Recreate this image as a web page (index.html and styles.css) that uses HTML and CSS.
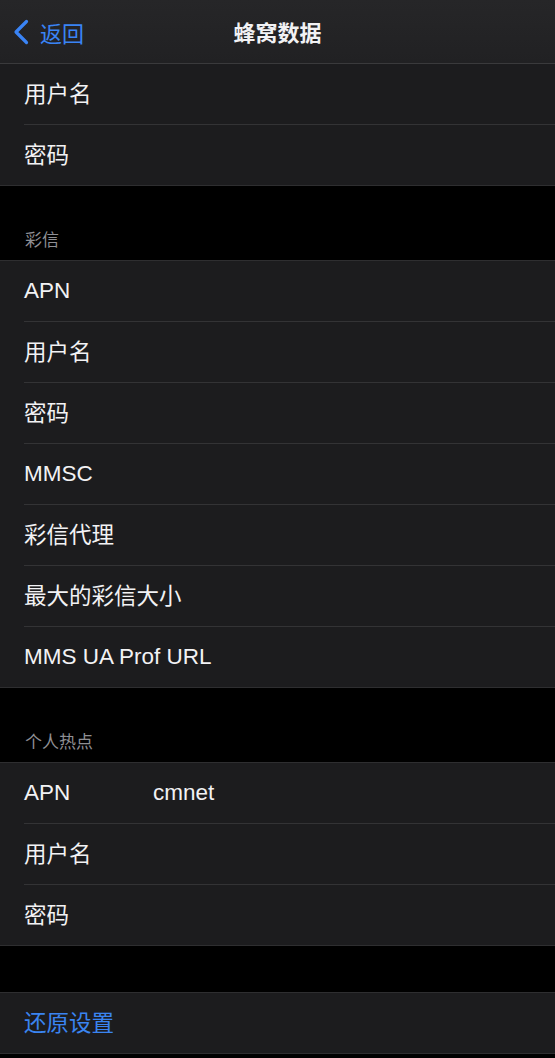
FILE: index.html
```html
<!DOCTYPE html>
<html lang="zh-CN">
<head>
    <meta charset="UTF-8">
    <meta name="viewport" content="width=device-width, initial-scale=1.0">
    <title>蜂窝数据</title>
    <link rel="stylesheet" href="styles.css">
</head>
<body>
    <div class="nav">
        <div class="nav-back">
            <svg class="chevron" width="18" height="26" viewBox="0 0 18 26">
                <path d="M14.5 2.5 L4 13 L14.5 23.5" fill="none" stroke="#3a84f5" stroke-width="3.2" stroke-linecap="round" stroke-linejoin="round"/>
            </svg>
            <span>返回</span>
        </div>
        <div class="nav-title">蜂窝数据</div>
        <div></div>
    </div>

    <div class="group no-top">
        <div class="row"><div class="row-inner zh">用户名</div></div>
        <div class="row"><div class="row-inner zh">密码</div></div>
    </div>

    <div class="section-header">彩信</div>
    <div class="group">
        <div class="row"><div class="row-inner">APN</div></div>
        <div class="row"><div class="row-inner zh">用户名</div></div>
        <div class="row"><div class="row-inner zh">密码</div></div>
        <div class="row"><div class="row-inner">MMSC</div></div>
        <div class="row"><div class="row-inner zh">彩信代理</div></div>
        <div class="row"><div class="row-inner zh">最大的彩信大小</div></div>
        <div class="row"><div class="row-inner">MMS UA Prof URL</div></div>
    </div>

    <div class="section-header">个人热点</div>
    <div class="group">
        <div class="row">
            <div class="row-inner">
                <span class="label">APN</span>
                <span class="value">cmnet</span>
            </div>
        </div>
        <div class="row"><div class="row-inner zh">用户名</div></div>
        <div class="row"><div class="row-inner zh">密码</div></div>
    </div>

    <div class="spacer"></div>
    <div class="group">
        <div class="row"><div class="row-inner zh reset">还原设置</div></div>
    </div>
</body>
</html>
```

FILE: styles.css
```css
body {
    margin: 0;
    background-color: #000;
    color: #f2f2f4;
    font-family: "Liberation Sans", "Noto Sans CJK SC", sans-serif;
    font-size: 22.5px;
}

.nav {
    display: grid;
    grid-template-columns: 1fr auto 1fr;
    align-items: center;
    height: 63px;
    background: linear-gradient(#262628, #212123);
    border-bottom: 1px solid #3a3a3c;
}

.nav-back {
    display: flex;
    align-items: center;
    gap: 10px;
    padding-left: 12px;
    color: #3a84f5;
    font-size: 22px;
}

.nav-title {
    font-weight: bold;
    font-size: 22px;
    padding-bottom: 2px;
}

.group {
    background-color: #1c1c1e;
    border-top: 1px solid #2e2e30;
    border-bottom: 1px solid #2e2e30;
}

.group.no-top {
    border-top: none;
}

.row {
    padding-left: 24px;
}

.row-inner {
    display: flex;
    align-items: center;
    height: 60px;
    border-bottom: 1px solid #333335;
}

/* CJK glyphs sit a little low in the line box */
.row-inner.zh {
    height: 56px;
    padding-bottom: 4px;
}

.row:last-child .row-inner {
    border-bottom: none;
}

.label {
    width: 129px;
}

.section-header {
    height: 74px;
    display: flex;
    align-items: flex-end;
    padding-left: 25px;
    box-sizing: border-box;
    padding-bottom: 9px;
    font-size: 17px;
    color: #8f8f94;
}

.spacer {
    height: 46px;
}

.reset {
    color: #3a84f0;
}
```
